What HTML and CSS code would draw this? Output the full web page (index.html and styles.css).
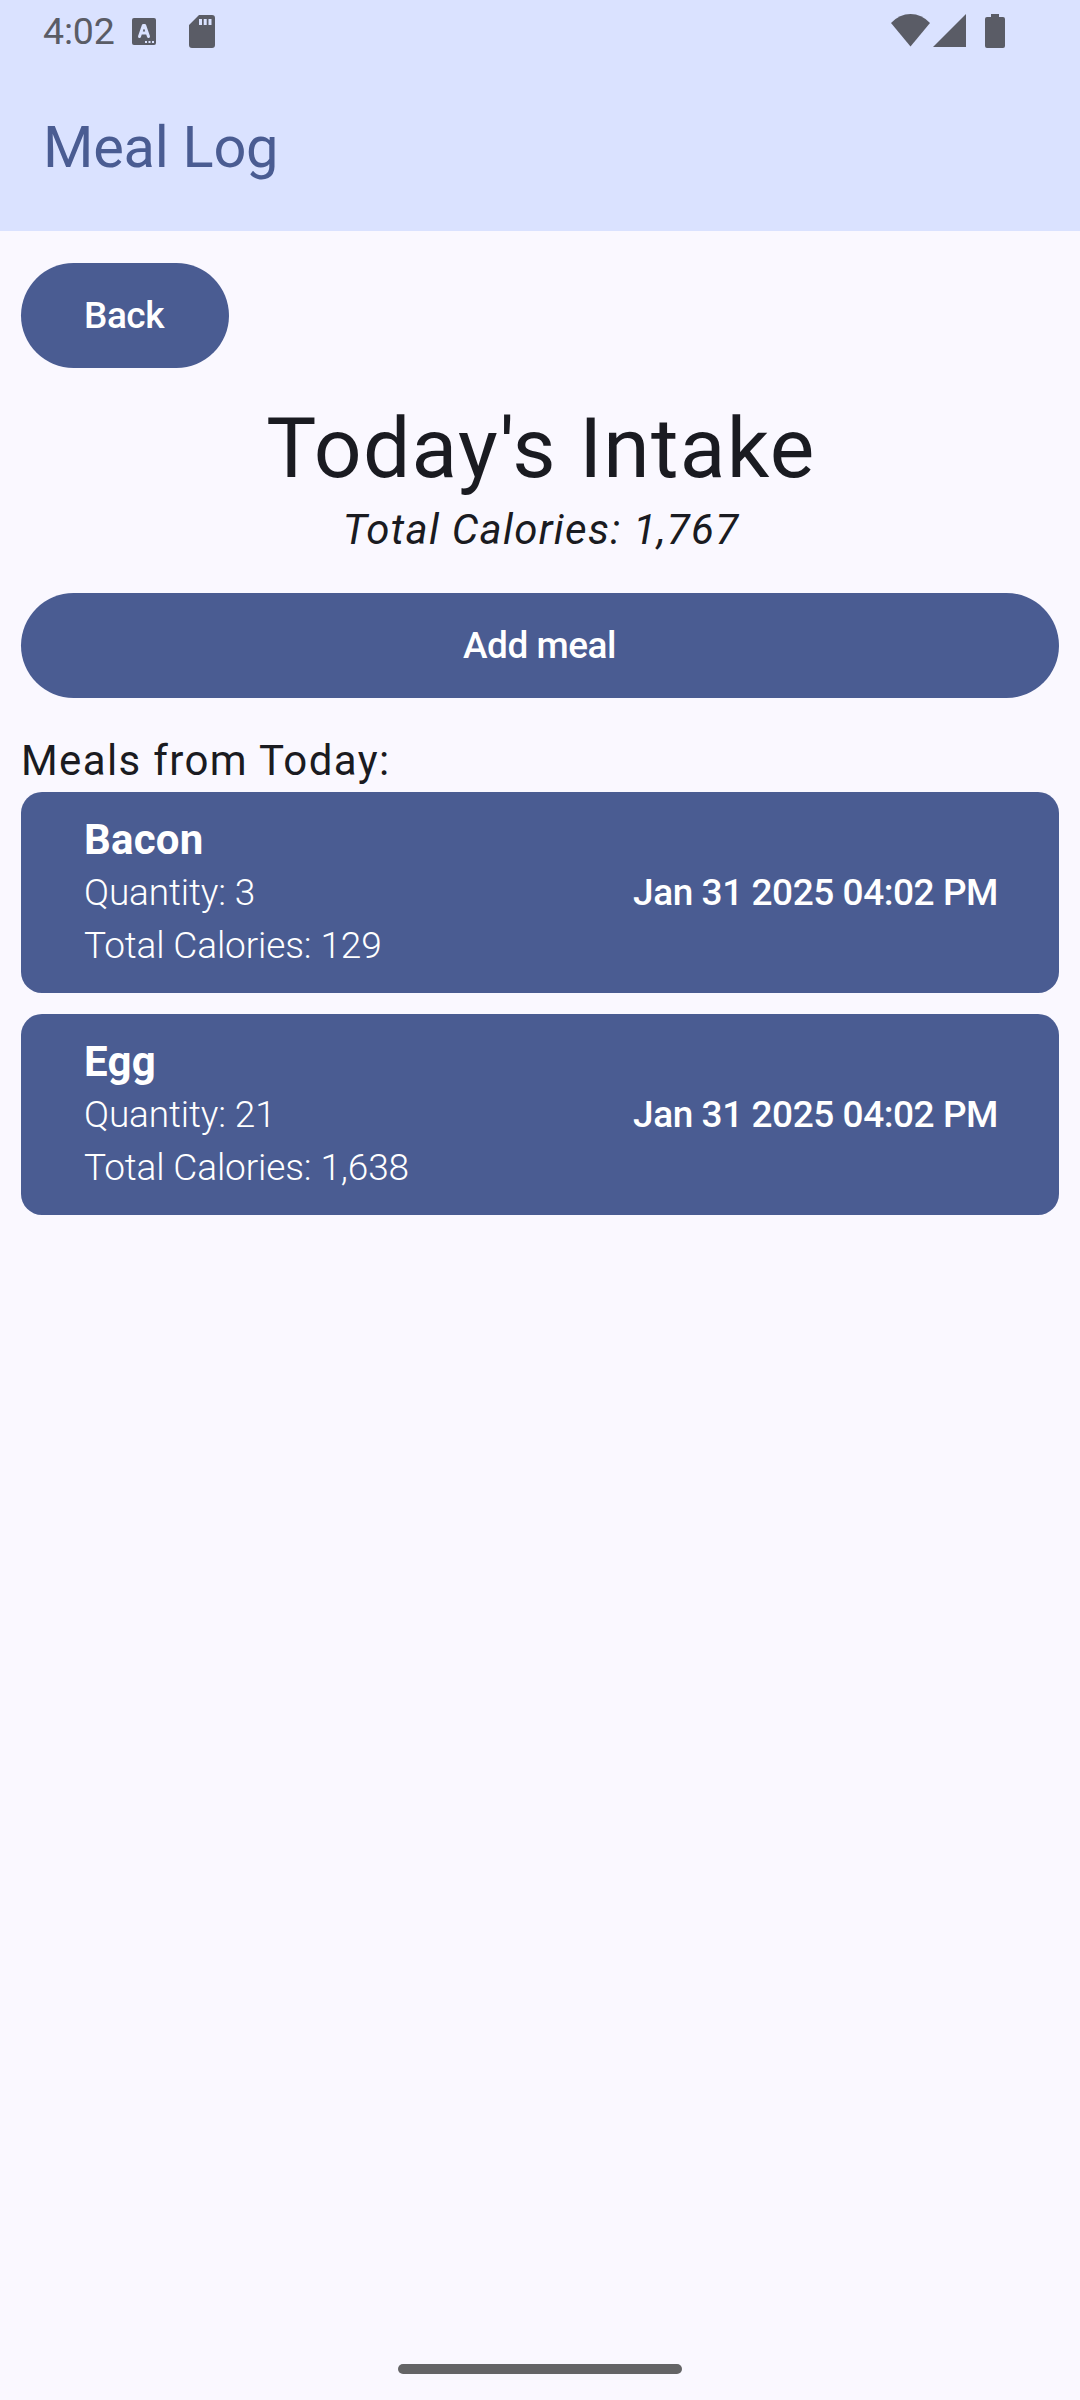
FILE: index.html
```html
<!DOCTYPE html>
<html lang="en">
<head>
<meta charset="utf-8">
<title>Meal Log</title>
<link rel="stylesheet" href="styles.css">
</head>
<body>
<div class="screen">
  <header class="top">
    <div class="status">
      <span class="clock">4:02</span>
      <svg class="ic-a" width="24" height="27" viewBox="0 0 24 27"><path fill="#5a5c66" d="M2 0h20a2 2 0 0 1 2 2v23a2 2 0 0 1-2 2H2a2 2 0 0 1-2-2V2a2 2 0 0 1 2-2z"/><path fill="none" stroke="#dae2ff" stroke-width="3" stroke-linecap="round" stroke-linejoin="round" d="M7.500 18.500 11.300 7.500h1.400l3.800 11M9 15h6"/><path fill="#dae2ff" d="M13 23h2v2h-2zM16.500 23h2v2h-2zM20 23h2v2h-2z"/></svg>
      <svg class="ic-sd" width="26" height="33" viewBox="0 0 26 33"><path fill="#5a5c66" fill-rule="evenodd" d="M10 0h13a3 3 0 0 1 3 3v27a3 3 0 0 1-3 3H3a3 3 0 0 1-3-3V10zM10 4v6h3V4zM14.700 4v6h3V4zM19.500 4v6h3V4z"/></svg>
      <span class="fill"></span>
      <svg class="ic-wifi" width="39" height="33" viewBox="0 0 39 33"><path fill="#5a5c66" d="M19.500 32.500 0 9Q8.500 0 19.500 0T39 9z"/></svg>
      <svg class="ic-cell" width="33" height="33" viewBox="0 0 33 33"><path fill="#5a5c66" d="M33 0v33H0z"/></svg>
      <svg class="ic-bat" width="20" height="34" viewBox="0 0 20 34"><path fill="#5a5c66" d="M6 0h8v3h4a2 2 0 0 1 2 2v27a2 2 0 0 1-2 2H2a2 2 0 0 1-2-2V5a2 2 0 0 1 2-2h4z"/></svg>
    </div>
    <div class="title">Meal Log</div>
  </header>
  <main class="content">
    <button class="btn back">Back</button>
    <h1 class="heading">Today's Intake</h1>
    <p class="total">Total Calories: 1,767</p>
    <button class="btn add">Add meal</button>
    <p class="label">Meals from Today:</p>
    <section class="meals">
      <article class="card">
        <div class="info"><strong class="name">Bacon</strong><span>Quantity: 3</span><span>Total Calories: 129</span></div>
        <time class="time">Jan 31 2025 04:02 PM</time>
      </article>
      <article class="card">
        <div class="info"><strong class="name">Egg</strong><span>Quantity: 21</span><span>Total Calories: 1,638</span></div>
        <time class="time">Jan 31 2025 04:02 PM</time>
      </article>
    </section>
  </main>
  <div class="handle"></div>
</div>
</body>
</html>
```
FILE: styles.css
```css
* { box-sizing: border-box; }
body { margin: 0; font-family: Roboto, sans-serif; background: #faf8ff; color: #1a1b21; }
.screen { width: 1080px; height: 2400px; display: flex; flex-direction: column; }
.top { height: 231px; background: #dae2ff; }
.status { height: 63px; padding: 0 75px 0 43px; display: flex; align-items: center; color: #5a5c66; }
.clock { font-size: 37.500px; line-height: 44px; width: 89px; margin-bottom: 2px; letter-spacing: -.2px; white-space: nowrap; }
.ic-sd { margin-left: 33px; }
.fill { flex: 1; }
.ic-wifi, .ic-cell { margin-bottom: 2px; }
.ic-cell { margin-left: 3px; }
.ic-bat { margin-left: 19px; margin-bottom: 1px; }
.title { height: 168px; padding-left: 43px; line-height: 168px; font-size: 57.750px; letter-spacing: -.25px; color: #4a5c92; }
.content { flex: 1; padding: 32px 21px 0; display: flex; flex-direction: column; }
.btn { height: 105px; border: 0; border-radius: 53px; padding: 0; background: #4a5c92; color: #fff; font: 500 37px Roboto, sans-serif; letter-spacing: -.5px; }
.back { width: 208px; padding-right: 2px; }
.heading { margin: 30px 0 0; padding-left: 2px; font-size: 84px; line-height: 102px; font-weight: 400; letter-spacing: 1.3px; text-align: center; }
.total { margin: 0; padding-left: 2px; font-size: 42px; line-height: 60px; font-style: italic; letter-spacing: 1.3px; text-align: center; }
.add { margin-top: 33px; padding-right: 1px; }
.label { margin: 31px 0 0; font-size: 42px; line-height: 63px; letter-spacing: 1.370px; }
.meals { display: flex; flex-direction: column; gap: 21px; }
.card { height: 201px; padding: 0 61px 0 63px; border-radius: 21px; background: #4a5c92; color: #fff; display: flex; justify-content: space-between; align-items: center; }
.info { display: flex; flex-direction: column; font-size: 37px; line-height: 53px; font-weight: 300; letter-spacing: -.130px; }
.name { font-size: 42px; font-weight: 700; letter-spacing: .2px; }
.time { font-size: 37px; font-weight: 500; letter-spacing: -.450px; }
.handle { align-self: center; width: 284px; height: 10px; margin-bottom: 26px; border-radius: 5px; background: #646466; }
```
